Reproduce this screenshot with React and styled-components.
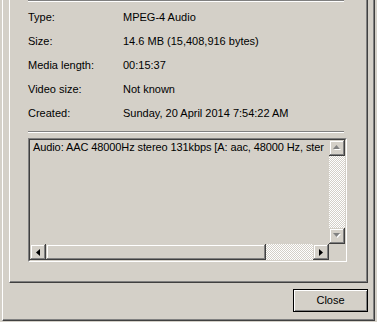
import React from "react";
import styled, { createGlobalStyle } from "styled-components";

const FACE = "#d4d0c8";

const Global = createGlobalStyle`
  html, body { margin: 0; padding: 0; background: ${FACE}; }
  body { font-family: "Liberation Sans", Arial, sans-serif; font-size: 11px; color: #000; }
  * { box-sizing: border-box; }
`;

const Frame = styled.div`
  width: 377px;
  height: 322px;
  padding: 0 2px 1px 2px;
  background: ${FACE};
  overflow: hidden;
`;

const Dialog = styled.div`
  height: 100%;
  display: flex;
  flex-direction: column;
  border-left: 1px solid #fff;
  border-right: 1px solid #404040;
  border-bottom: 1px solid #404040;
  box-shadow: inset -1px -1px #808080;
  padding: 0 6px 0 6px;
`;

const TabPage = styled.div`
  border-left: 1px solid #fff;
  border-right: 1px solid #404040;
  border-bottom: 1px solid #404040;
  box-shadow: inset -1px -1px #808080;
  padding: 0 20px 20px 18px;
`;

const Separator = styled.div`
  width: 316px;
  height: 2px;
  border-top: 1px solid #808080;
  border-bottom: 1px solid #fff;
  margin-top: ${(p) => p.$top || 0}px;
`;

const PropList = styled.div`
  margin-top: 3px;
  display: grid;
  grid-template-columns: 95px 1fr;
  grid-auto-rows: 24px;
  line-height: 24px;
  white-space: nowrap;
`;

const Label = styled.div``;
const Value = styled.div``;

const Memo = styled.div`
  margin-top: 5px;
  height: 124px;
  border: 1px solid;
  border-color: #808080 #fff #fff #808080;
`;

const MemoInner = styled.div`
  height: 100%;
  border: 1px solid;
  border-color: #404040 ${FACE} ${FACE} #404040;
  display: grid;
  grid-template-columns: 1fr 16px;
  grid-template-rows: 1fr 16px;
  background: ${FACE};
`;

const MemoText = styled.div`
  padding: 1px 0 0 3px;
  line-height: 13px;
  letter-spacing: -0.1px;
  white-space: nowrap;
  overflow: hidden;
`;

const VScroll = styled.div`
  display: flex;
  flex-direction: column;
`;

const HScroll = styled.div`
  display: flex;
`;

const Track = styled.div`
  flex: 1;
  background: repeating-conic-gradient(#fff 0% 25%, ${FACE} 0% 50%) 0 0 / 2px 2px;
`;

const raised = `
  background: ${FACE};
  box-shadow: inset -1px -1px #404040, inset 1px 1px ${FACE}, inset -2px -2px #808080, inset 2px 2px #fff;
`;

const ScrollButton = styled.div`
  width: 16px;
  height: 16px;
  flex: none;
  display: flex;
  align-items: center;
  justify-content: center;
  ${raised}
  svg { display: block; }
`;

const Thumb = styled.div`
  flex: none;
  width: ${(p) => p.$size}px;
  ${raised}
`;

const Corner = styled.div`
  background: ${FACE};
`;

const ButtonRow = styled.div`
  margin-top: 6px;
  display: flex;
  justify-content: flex-end;
`;

const PushButton = styled.button`
  width: 75px;
  height: 23px;
  padding: 0;
  margin: 0;
  font: inherit;
  color: #000;
  line-height: 21px;
  background: ${FACE};
  border: 1px solid #000;
  box-shadow: inset 1px 1px #fff, inset -1px -1px #808080;
  text-align: center;
`;

const ArrowUp = ({ disabled }) => (
  <svg width="8" height="5" viewBox="0 0 8 5" style={{ marginTop: -1 }}>
    {disabled && <polygon points="4.5,1 8,5 1,5" fill="#fff" />}
    <polygon points="3.5,0 7,4 0,4" fill={disabled ? "#808080" : "#000"} />
  </svg>
);

const ArrowDown = ({ disabled }) => (
  <svg width="8" height="5" viewBox="0 0 8 5" style={{ marginTop: -1 }}>
    {disabled && <polygon points="1,1 8,1 4.5,5" fill="#fff" />}
    <polygon points="0,0 7,0 3.5,4" fill={disabled ? "#808080" : "#000"} />
  </svg>
);

const ArrowLeft = () => (
  <svg width="4" height="7" viewBox="0 0 4 7" style={{ marginLeft: -1 }}>
    <polygon points="4,0 4,7 0,3.5" fill="#000" />
  </svg>
);

const ArrowRight = () => (
  <svg width="4" height="7" viewBox="0 0 4 7">
    <polygon points="0,0 4,3.5 0,7" fill="#000" />
  </svg>
);

const rows = [
  ["Type:", "MPEG-4 Audio"],
  ["Size:", "14.6 MB (15,408,916 bytes)"],
  ["Media length:", "00:15:37"],
  ["Video size:", "Not known"],
  ["Created:", "Sunday, 20 April 2014 7:54:22 AM"],
];

export default function App() {
  return (
    <>
      <Global />
      <Frame>
        <Dialog>
          <TabPage>
            <Separator />
            <PropList>
              {rows.map(([k, v]) => (
                <React.Fragment key={k}>
                  <Label>{k}</Label>
                  <Value>{v}</Value>
                </React.Fragment>
              ))}
            </PropList>
            <Separator $top={6} />
            <Memo>
              <MemoInner>
                <MemoText>Audio: AAC 48000Hz stereo 131kbps [A: aac, 48000 Hz, ster</MemoText>
                <VScroll>
                  <ScrollButton>
                    <ArrowUp disabled />
                  </ScrollButton>
                  <Track />
                  <ScrollButton>
                    <ArrowDown disabled />
                  </ScrollButton>
                </VScroll>
                <HScroll>
                  <ScrollButton>
                    <ArrowLeft />
                  </ScrollButton>
                  <Thumb $size={220} />
                  <Track />
                  <ScrollButton>
                    <ArrowRight />
                  </ScrollButton>
                </HScroll>
                <Corner />
              </MemoInner>
            </Memo>
          </TabPage>
          <ButtonRow>
            <PushButton>Close</PushButton>
          </ButtonRow>
        </Dialog>
      </Frame>
    </>
  );
}
